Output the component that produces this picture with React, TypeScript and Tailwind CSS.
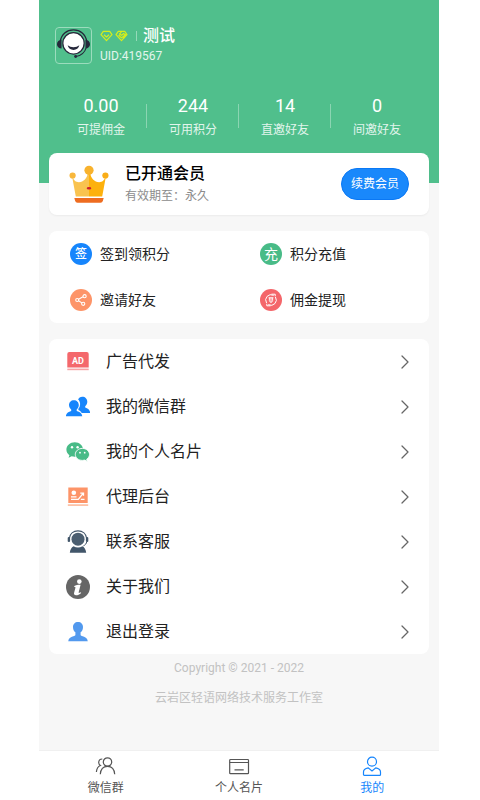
import React from 'react';
import { ChevronRight } from 'lucide-react';

const stats = [
  { value: '0.00', label: '可提佣金' },
  { value: '244', label: '可用积分' },
  { value: '14', label: '直邀好友' },
  { value: '0', label: '间邀好友' },
];

const ShareIcon = () => (
  <svg viewBox="0 0 22 22" className="h-full w-full" fill="none" stroke="#fff" strokeWidth="1.1">
    <path d="M8.6 10.2 13 7.8M8.6 11.8l3.2 2.1" />
    <circle cx="7.2" cy="11" r="1.5" />
    <circle cx="14.6" cy="7.2" r="1.6" />
    <circle cx="13.2" cy="14.8" r="1.6" />
  </svg>
);

const WithdrawIcon = () => (
  <svg viewBox="0 0 22 22" className="h-full w-full" fill="none" stroke="#fff" strokeWidth="1" strokeLinecap="round">
    <path d="M6.400 13.800A5.400 5.400 0 0 1 13.400 6.200M15.600 8.200A5.400 5.400 0 0 1 8.600 15.800" />
    <path d="M11.800 5.200h3.400v1.600M10.200 16.800H6.800v-1.600" />
    <path d="M9 8.800h4M9.400 9v2.600c0 .9.700 1.500 1.600 1.800.9-.3 1.600-.9 1.600-1.800V9M11 9v4" strokeWidth=".9" />
  </svg>
);

const shortcuts = [
  { label: '签到领积分', color: 'bg-[#1685fc]', icon: <span className="text-xs font-medium">签</span> },
  { label: '积分充值', color: 'bg-[#48bb87]', icon: <span className="text-sm">充</span> },
  { label: '邀请好友', color: 'bg-[#fd9468]', icon: <ShareIcon /> },
  { label: '佣金提现', color: 'bg-[#f4666a]', icon: <WithdrawIcon /> },
];

const AdIcon = () => (
  <svg viewBox="0 0 24 24" className="h-6 w-6">
    <path d="M1.3 4a2 2 0 0 1 2-2h17.400a2 2 0 0 1 2 2v13.400H1.300z" fill="#f4686c" />
    <path d="M1.3 18.600h21.400v1.600H1.300z" fill="#f7a3a5" />
    <text x="12" y="13.600" textAnchor="middle" fontSize="9" fontWeight="700" fill="#fff">AD</text>
  </svg>
);

const GroupIcon = () => (
  <svg viewBox="0 0 24 24" className="h-6 w-6" fill="#1685fc">
    <path d="M16.300 1.700c2.900 0 5 2.100 5 5.100 0 1.900-.8 3.400-2.100 4.400v1.400c2.900.9 4.700 2.400 5.100 5.400h-8.500c-1-1.600-2.200-2.500-3.400-3v-1.300a6.600 6.600 0 0 0 1.700-4.600c0-1.900-.8-3.500-2-4.500.6-1.700 2.200-2.900 4.200-2.900z" />
    <path d="M7.900 5.200c2.900 0 4.900 2.100 4.900 4.900 0 1.900-.8 3.300-2.100 4.300v1.600c3.100.8 5.100 2.400 5.600 5.300H-.2c.4-2.900 2.400-4.500 5.400-5.300v-1.600c-1.300-1-2.200-2.400-2.200-4.300 0-2.800 2-4.900 4.900-4.900z" />
  </svg>
);

const WechatIcon = () => (
  <svg viewBox="0 0 24 24" className="h-6 w-6">
    <path d="M8.800 2.200C4.100 2.200.4 5.500.4 9.600c0 2.300 1.100 4.200 3 5.600l-.8 2.600 3-1.500c1 .3 2.100.5 3.200.5 4.600 0 8.300-3.200 8.300-7.200s-3.700-7.400-8.300-7.400z" fill="#48bb87" />
    <path d="M16.400 8.400c-4 0-7.100 2.700-7.100 6 0 3.300 3.100 6 7.100 6 .8 0 1.600-.1 2.400-.3l2.500 1.300-.6-2.200c1.700-1.100 2.800-2.800 2.800-4.800 0-3.300-3.100-6-7.100-6z" fill="#48bb87" stroke="#fff" strokeWidth=".9" />
    <g fill="#fff">
      <circle cx="6" cy="7.200" r="1.200" />
      <circle cx="11.600" cy="7.200" r="1.200" />
      <circle cx="14" cy="12.700" r=".9" />
      <circle cx="18.700" cy="12.700" r=".9" />
    </g>
  </svg>
);

const AgentIcon = () => (
  <svg viewBox="0 0 24 24" className="h-6 w-6" fill="none">
    <path d="M2.300 2.500h19.400V18H2.300z" fill="#fd9468" />
    <path d="M1.800 19.300h20.400v1.600H1.800z" fill="#fdbb9d" />
    <circle cx="7.800" cy="7.800" r="2.300" fill="#fff" />
    <path d="M5 11.800h5.500M5 14.300h7.300l4.800-6M14.300 8.100h3.200v2.600M14.800 14.300h3.700" stroke="#fff" strokeWidth="1.300" />
  </svg>
);

const ServiceIcon = () => (
  <svg viewBox="0 0 24 24" className="h-6 w-6">
    <path d="M3.300 8.500C3.800 3.900 7.300.9 12 .9s8.200 3 8.700 7.600" fill="none" stroke="#42566a" strokeWidth="1.100" />
    <circle cx="12" cy="9.200" r="6.500" fill="#4b5e70" />
    <rect x="1.700" y="7" width="2.400" height="5" rx="1.100" fill="#42566a" />
    <rect x="19.900" y="7" width="2.400" height="5" rx="1.100" fill="#42566a" />
    <path d="M20.800 11.500c-.4 2.200-1.600 3.600-3.400 4.400" fill="none" stroke="#42566a" />
    <path d="M7.500 16.300c2.900 1.600 6.100 1.600 9 0 2 1.300 3.300 3.300 3.700 6.500H3.800c.4-3.200 1.700-5.200 3.700-6.500z" fill="#42566a" />
  </svg>
);

const InfoIcon = () => (
  <svg viewBox="0 0 24 24" className="h-6 w-6">
    <circle cx="12" cy="12" r="12" fill="#666" />
    <circle cx="13.300" cy="6.600" r="2.300" fill="#fff" />
    <path d="M8.300 11.100c1.500-1 3.400-1.400 6.300-1.400l-2 7.700c0 .7.800.6 2.100-.2l.5.800c-1.700 1.600-3.400 2.300-5.100 2.300-1.700 0-2.400-1-2-2.500l1.400-5.300c.1-.5-.3-.7-1.200-.5z" fill="#fff" />
  </svg>
);

const LogoutIcon = () => (
  <svg viewBox="0 0 24 24" className="h-6 w-6">
    <path d="M12 2c3 0 5 2.100 5 5 0 2.400-.9 4.300-2.400 5.300v2.500c0 .7.500 1 1.300 1.300 3.200.9 5.400 2 5.900 5.100H2.200c.5-3.100 2.700-4.200 5.900-5.100.8-.3 1.300-.6 1.300-1.300v-2.500C7.900 11.300 7 9.400 7 7c0-2.900 2-5 5-5z" fill="#5299ee" />
  </svg>
);

const menu = [
  { label: '广告代发', icon: <AdIcon /> },
  { label: '我的微信群', icon: <GroupIcon /> },
  { label: '我的个人名片', icon: <WechatIcon /> },
  { label: '代理后台', icon: <AgentIcon /> },
  { label: '联系客服', icon: <ServiceIcon /> },
  { label: '关于我们', icon: <InfoIcon /> },
  { label: '退出登录', icon: <LogoutIcon /> },
];

const Avatar = () => (
  <svg viewBox="0 0 36 36" className="h-full w-full">
    <circle cx="18" cy="15.800" r="11" fill="#fff" stroke="#26283b" strokeWidth="1.300" />
    <path d="M4.300 14C5.500 6.500 11 2 18 2s12.500 4.500 13.700 12" fill="none" stroke="#26283b" strokeWidth="1.300" />
    <path d="M5.700 12.200v9C3 21 1 19.300 1 16.700s2-4.300 4.700-4.500zM30.300 12.200v9c2.700-.2 4.700-1.900 4.700-4.500s-2-4.300-4.700-4.500z" fill="#26283b" />
    <path d="M12 17.800c3.300 2.600 8.700 2.600 12 0-.7 3.100-3 4.700-6 4.700s-5.300-1.600-6-4.700z" fill="#26283b" />
    <path d="M31 20.500c-1.500 5-5 8-10.500 8.800" fill="none" stroke="#26283b" strokeWidth="1.100" />
    <circle cx="20.200" cy="29.300" r="1.500" fill="#26283b" />
  </svg>
);

const Crown = () => (
  <svg viewBox="0 0 40 38" className="h-[38px] w-10">
    <path d="M2.900 10.500C4.500 15.500 7 17.200 9.800 17.200c4.700 0 8.600-4.200 9-9.200H20v23.500H6.800z" fill="#f9c34f" />
    <path d="M37.100 10.500c-1.600 5-4.100 6.700-6.900 6.700-4.700 0-8.600-4.200-9-9.200H20v23.500h13.200z" fill="#fdb10d" />
    <circle cx="3.600" cy="10.500" r="3.100" fill="#f8b73b" />
    <circle cx="36.400" cy="10.500" r="3.100" fill="#f9ad17" />
    <circle cx="20" cy="5.300" r="4.600" fill="#f8b22d" />
    <path d="M5.300 33h29.400l-.8 2.800a2.500 2.500 0 0 1-2.400 1.900h-23a2.500 2.500 0 0 1-2.400-1.900z" fill="#ee6c20" />
    <ellipse cx="20" cy="23.300" rx="2.300" ry="1.300" fill="#cf1d2b" />
  </svg>
);

const Diamond = ({ filled = false }: { filled?: boolean }) => (
  <svg viewBox="0 0 13 12" className="h-3 w-[13px]" fill="none" stroke="#d6ed1c" strokeWidth="1.200" strokeLinejoin="round">
    <path d="M3.300 1.300h6.400L12 4.600 6.500 10.700 1 4.600z" />
    {filled ? <path d="m3.600 5 2.900 2.900L11 4.200M6.500 1.800 4.600 4l2 1.300 2-1.800L11 5.700M8 8.500l2-2" /> : <path d="M4 4.800 6.500 7l2.500-2.200" />}
  </svg>
);

const tabs = [
  {
    label: '微信群',
    active: false,
    icon: (
      <>
        <circle cx="12.500" cy="6" r="4.200" />
        <path d="M5.300 18.300c.3-4.800 3-8 7.200-8s6.900 3.200 7.200 8" />
        <path d="M7.300 3C5 3.100 3.700 4.500 3.700 6.500c0 1.300.6 2.300 1.700 3C3.100 10.400 1.700 12.800 1.400 16" />
      </>
    ),
  },
  {
    label: '个人名片',
    active: false,
    icon: (
      <>
        <rect x="1.700" y="3.500" width="18.800" height="14.200" rx=".8" />
        <path d="M1.700 6.500h18.800M6.500 13.800h9.200" />
      </>
    ),
  },
  {
    label: '我的',
    active: true,
    icon: (
      <>
        <circle cx="11" cy="5.700" r="4.500" />
        <path d="M2.500 18.500v-2.500c0-2.500 2-3.700 4.700-4.200L11 15l3.800-3.200c2.700.5 4.700 1.700 4.700 4.200v2.500c0 .6-.3.900-.9.900H3.400c-.6 0-.9-.3-.9-.9z" />
      </>
    ),
  },
];

const App = () => {
  return (
    <div className="min-h-screen bg-white pl-[39px] pr-[41px] font-[Roboto,'Noto_Sans_CJK_SC',sans-serif] text-[#222]">
      <div className="flex min-h-screen flex-col bg-[#f7f7f7]">
        <header className="bg-[#50bf8c] px-4 pt-[26px] pb-[45px] text-white">
          <div className="flex items-center gap-2">
            <div className="h-[37px] w-[37px] rounded border border-[#9bdcbd]">
              <Avatar />
            </div>
            <div>
              <div className="flex h-5 items-center">
                <Diamond />
                <span className="ml-[2px]"><Diamond filled /></span>
                <span className="ml-2 h-[10px] w-px bg-[#95d9b9]" />
                <h1 className="ml-[6px] text-base leading-5 font-medium">测试</h1>
              </div>
              <p className="mt-[2px] text-xs leading-4 text-[#e2f5ec]">UID:419567</p>
            </div>
          </div>

          <div className="mt-[30px] grid grid-cols-4">
            {stats.map((item, i) => (
              <div key={item.label} className="relative text-center">
                <p className="text-lg leading-6">{item.value}</p>
                <p className="mt-1 text-xs leading-4 text-[#e2f5ec]">{item.label}</p>
                {i < stats.length - 1 && (
                  <span className="absolute top-[10px] right-0 h-6 w-px bg-[#8bd5b2]" />
                )}
              </div>
            ))}
          </div>
        </header>

        <main className="-mt-[30px] flex flex-col gap-4 px-[10px]">
          {/* Membership */}
          <section className="flex h-[62px] items-center rounded-lg bg-white px-5 shadow-xs">
            <Crown />
            <div className="ml-4 flex-1">
              <h2 className="text-base leading-6 font-medium text-black">已开通会员</h2>
              <p className="text-xs leading-5 text-[#8c8c8c]">有效期至：永久</p>
            </div>
            <button type="button" className="h-8 rounded-full border border-[#0a78f5] bg-[#1988fb] px-[9px] text-xs text-white">
              续费会员
            </button>
          </section>

          {/* Shortcuts */}
          <section className="grid grid-cols-2 rounded-lg bg-white">
            {shortcuts.map((item) => (
              <button key={item.label} type="button" className="flex h-[46px] items-center gap-2 pl-[21px] text-sm">
                <span className={`flex h-[22px] w-[22px] items-center justify-center rounded-full text-white ${item.color}`}>
                  {item.icon}
                </span>
                {item.label}
              </button>
            ))}
          </section>

          {/* Menu list */}
          <nav className="rounded-lg bg-white">
            {menu.map((item) => (
              <a key={item.label} href="#" className="flex h-[45px] items-center gap-4 pr-3 pl-[17px] text-base">
                {item.icon}
                <span className="flex-1">{item.label}</span>
                <ChevronRight className="h-6 w-6 text-[#666]" strokeWidth={1.25} />
              </a>
            ))}
          </nav>
        </main>

        <footer className="mt-1 text-center text-xs leading-5 text-[#c2c2c2]">
          <p>Copyright © 2021 - 2022</p>
          <p className="mt-[10px]">云岩区轻语网络技术服务工作室</p>
        </footer>

        <nav className="sticky bottom-0 mt-auto grid grid-cols-3 border-t border-[#f0f0f0] bg-white">
          {tabs.map((tab) => (
            <a
              key={tab.label}
              href="#"
              className={`flex flex-col items-center pt-[5px] pb-1 text-xs leading-4 ${tab.active ? 'text-[#1685fc]' : 'text-[#555]'}`}
            >
              <svg viewBox="0 0 22 20" className="h-5 w-[22px]" fill="none" stroke="currentColor" strokeWidth="1.200">
                {tab.icon}
              </svg>
              <span className="mt-1">{tab.label}</span>
            </a>
          ))}
        </nav>
      </div>
    </div>
  );
};

export default App;
